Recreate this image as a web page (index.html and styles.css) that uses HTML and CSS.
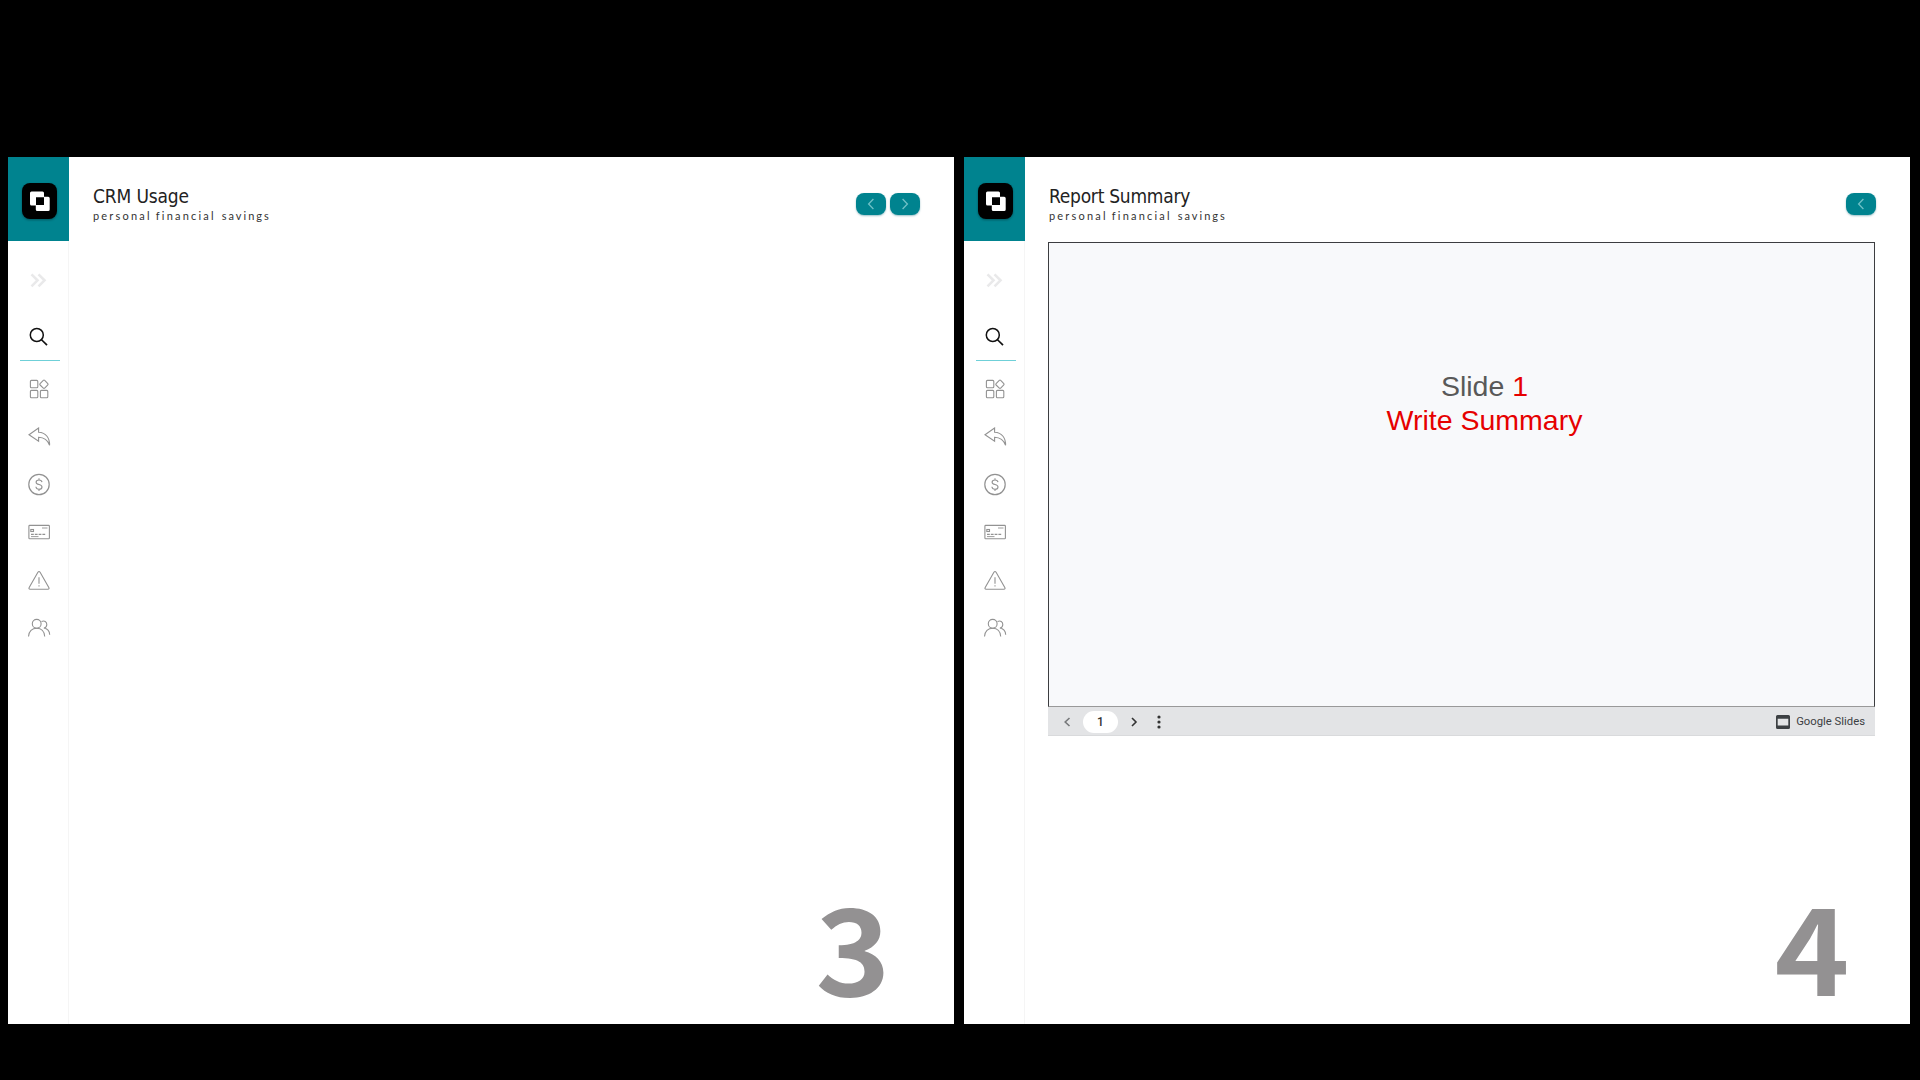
FILE: index.html
```html
<!DOCTYPE html>
<html lang="en">
<head>
<meta charset="utf-8">
<title>CRM Report</title>
<link rel="stylesheet" href="styles.css">
</head>
<body>
<svg class="sprite" aria-hidden="true">
  <symbol id="logo" viewBox="0 0 35 36">
    <rect width="35" height="36" rx="8" fill="#000"/>
    <path fill="#fff" fill-rule="evenodd" d="M9.5 8.5h11a1.5 1.5 0 0 1 1.5 1.5v3.7h4.2a1.5 1.5 0 0 1 1.5 1.5v11.3a1.5 1.5 0 0 1-1.5 1.5H15.300a1.500 1.500 0 0 1-1.500-1.500V22.500H9.500A1.500 1.500 0 0 1 8 21V10a1.500 1.500 0 0 1 1.500-1.500zM14 14.200v7.800h8v-7.800z"/>
  </symbol>
  <symbol id="expand" viewBox="0 0 24 24"><path d="M4.500 6.300l6 6-6 6M11.500 6.300l6 6-6 6" stroke="#e9e9ea" stroke-width="2.600"/></symbol>
  <symbol id="search" viewBox="0 0 24 24"><circle cx="9.800" cy="11" r="6.500" stroke="#111" stroke-width="1.500"/><path d="M14.300 15.500l5.700 5.700" stroke="#111" stroke-width="1.700"/></symbol>
  <symbol id="grid" viewBox="0 0 24 24"><rect x="3.400" y="3.400" width="7.400" height="7.400" rx="1"/><rect x="3.400" y="13.400" width="7.400" height="7.400" rx="1"/><rect x="13.400" y="13.400" width="7.400" height="7.400" rx="1"/><path d="M16.300 3.300l-3.200 3.300q-.7.700 0 1.400l3.200 3.100q.7.600 1.400 0l3.100-3.200q.6-.6 0-1.300l-3.100-3.300q-.7-.7-1.400 0z"/></symbol>
  <symbol id="reply" viewBox="0 0 24 24"><path d="M11.600 3L2 9.700l9.600 6.500v-3.900c5 .2 9 2.500 11 8 .2-7-3.500-12.800-11-13.100z"/></symbol>
  <symbol id="dollar" viewBox="0 0 24 24"><circle cx="12" cy="11.500" r="10.200" stroke-width="1.200"/><path d="M15 9.200c-.2-1.400-1.300-2.200-3-2.200s-2.900.9-2.900 2.200c0 3.200 5.900 1.500 5.900 4.700 0 1.400-1.300 2.300-3 2.300s-2.900-.9-3.100-2.400M12 5.300V7M12 16.200v1.900"/></symbol>
  <symbol id="card" viewBox="0 0 24 24"><rect x="1.900" y="4.400" width="20.500" height="13.300" rx=".8"/><rect x="3.800" y="8.500" width="2.700" height="2"/><path d="M15 7h5.500" stroke-width=".9"/><path d="M4 13.400h14.500" stroke-dasharray="2.800 1"/><path d="M4 15.600h7.500" stroke-width=".9"/></symbol>
  <symbol id="warn" viewBox="0 0 24 24"><path d="M10.900 3.300L2.200 18.500q-.8 1.700.9 1.700h17.800q1.700 0 .9-1.700L13.100 3.300q-1.100-1.700-2.200 0z"/><path d="M12 8.200v6.600M12 16.200v1.300"/></symbol>
  <symbol id="users" viewBox="0 0 24 24"><circle cx="9.700" cy="6.800" r="4.400"/><path d="M1.500 19.600c.2-5.200 3.700-8.400 8.200-8.400s7.800 3.200 8 8.400M14.500 4.600c3-1.400 5.300.1 5.300 2.900 0 1.700-1 3-2.500 3.600M16.800 11c3.500.5 5.700 3 5.900 6.700"/></symbol>
  <symbol id="prev" viewBox="0 0 30 22"><path d="M17.400 6l-4.800 5 4.800 5"/></symbol>
  <symbol id="next" viewBox="0 0 30 22"><path d="M12.600 6l4.800 5-4.800 5"/></symbol>
</svg>

<main class="board">
  <section class="page">
    <nav class="sidebar">
      <div class="brand"><svg class="logo"><use href="#logo"/></svg></div>
      <div class="slot slot-expand"><svg class="icon"><use href="#expand"/></svg></div>
      <div class="slot slot-search"><svg class="icon"><use href="#search"/></svg></div>
      <div class="slot"><svg class="icon"><use href="#grid"/></svg></div>
      <div class="slot"><svg class="icon"><use href="#reply"/></svg></div>
      <div class="slot"><svg class="icon"><use href="#dollar"/></svg></div>
      <div class="slot"><svg class="icon"><use href="#card"/></svg></div>
      <div class="slot"><svg class="icon"><use href="#warn"/></svg></div>
      <div class="slot"><svg class="icon"><use href="#users"/></svg></div>
    </nav>
    <div class="content">
      <header class="header">
        <div>
          <h1 class="title title-crm">CRM Usage</h1>
          <p class="subtitle"><span>personal</span><span>financial</span><span class="last">savings</span></p>
        </div>
        <div class="pager">
          <svg class="nav-btn"><use href="#prev"/></svg>
          <svg class="nav-btn"><use href="#next"/></svg>
        </div>
      </header>
      <div class="number">3</div>
    </div>
  </section>

  <section class="page">
    <nav class="sidebar">
      <div class="brand"><svg class="logo"><use href="#logo"/></svg></div>
      <div class="slot slot-expand"><svg class="icon"><use href="#expand"/></svg></div>
      <div class="slot slot-search"><svg class="icon"><use href="#search"/></svg></div>
      <div class="slot"><svg class="icon"><use href="#grid"/></svg></div>
      <div class="slot"><svg class="icon"><use href="#reply"/></svg></div>
      <div class="slot"><svg class="icon"><use href="#dollar"/></svg></div>
      <div class="slot"><svg class="icon"><use href="#card"/></svg></div>
      <div class="slot"><svg class="icon"><use href="#warn"/></svg></div>
      <div class="slot"><svg class="icon"><use href="#users"/></svg></div>
    </nav>
    <div class="content">
      <header class="header">
        <div>
          <h1 class="title title-report">Report Summary</h1>
          <p class="subtitle"><span>personal</span><span>financial</span><span class="last">savings</span></p>
        </div>
        <div class="pager">
          <svg class="nav-btn"><use href="#prev"/></svg>
        </div>
      </header>
      <div class="viewer">
        <div class="slide">
          <p class="slide-text">Slide <span class="red">1</span></p>
          <p class="slide-text red">Write Summary</p>
        </div>
        <div class="toolbar">
          <svg class="tool" viewBox="0 0 10 12"><path d="M7.500 2L3.200 6l4.300 4" stroke="#77797b"/></svg>
          <span class="current">1</span>
          <svg class="tool tool-next" viewBox="0 0 10 12"><path d="M3 2l4 4-4 4" stroke="#333"/></svg>
          <svg class="dots" viewBox="0 0 4 14"><circle cx="2" cy="2" r="1.600"/><circle cx="2" cy="7" r="1.600"/><circle cx="2" cy="12" r="1.600"/></svg>
          <svg class="slides-icon" viewBox="0 0 14 14"><path fill-rule="evenodd" d="M1.500 0h11Q14 0 14 1.500v11Q14 14 12.500 14h-11Q0 14 0 12.500v-11Q0 0 1.500 0zM1.700 3.700v6.800h10.600V3.700z"/></svg>
          <span class="credit">Google Slides</span>
        </div>
      </div>
      <div class="number number-four">4</div>
    </div>
  </section>
</main>
</body>
</html>
```

FILE: styles.css
```css
* { box-sizing: border-box; }
body { margin: 0; background: #000; overflow: hidden; }
h1, p { margin: 0; font-weight: 400; }
svg { display: block; flex: none; }
.sprite { display: none; }
.board {
  display: flex;
  gap: 10px;
  width: 1920px;
  height: 1080px;
  padding: 157px 10px 56px 8px;
}
.page { display: flex; width: 946px; height: 867px; background: #fff; }
.sidebar {
  display: flex;
  flex-direction: column;
  width: 61px;
  border-right: 1px solid #f5f5f5;
}
.brand {
  width: 61px;
  height: 84px;
  padding: 26px 0 0 14px;
  background: #00838f;
}
.logo { width: 35px; height: 36px; filter: drop-shadow(0 1px 1px rgba(0, 0, 0, .35)); }
.slot { height: 48px; padding: 12px 0 0 19px; }
.slot-expand { height: 79px; padding-top: 27px; }
.slot-search {
  width: 40px;
  height: 41px;
  margin: 0 0 4px 12px;
  padding: 4px 0 0 7px;
  border-bottom: 1px solid #6fd0d8;
}
.icon { width: 24px; height: 24px; fill: none; stroke: #929292; stroke-width: 1.100; }
.content { display: flex; flex: 1; flex-direction: column; }
.header {
  display: flex;
  justify-content: space-between;
  height: 85px;
  padding: 26px 34.500px 0 24px;
}
.title {
  height: 26px;
  font: 400 19px/27px "DejaVu Sans Condensed", "DejaVu Sans", sans-serif;
  font-stretch: condensed;
  color: #222;
  letter-spacing: -.25px;
}
.title-crm { letter-spacing: -.15px; }
.subtitle {
  display: flex;
  gap: 4px;
  font: 400 11px/14px Lato, sans-serif;
  letter-spacing: 2.200px;
  color: #333;
}
.subtitle .last { margin-left: 2px; letter-spacing: 2px; }
.pager { display: flex; gap: 4px; padding-top: 10px; }
.nav-btn {
  width: 30px;
  height: 22px;
  border-radius: 8px;
  background: #00838f;
  box-shadow: 0 1px 2px rgba(0, 100, 120, .4);
  fill: none;
  stroke: #6fc0c6;
  stroke-width: 1.300;
}
.viewer { width: 827px; margin-left: 23px; }
.slide {
  height: 465px;
  padding: 126px 0 0 46px;
  border: 1px solid #3c3d40;
  border-bottom-color: #999;
  background: #f8f9fb;
}
.slide-text {
  font: 400 28.500px/34px "Liberation Sans", Arial, sans-serif;
  text-align: center;
  color: #595959;
}
.slide .red { color: #e60000; }
.toolbar {
  display: flex;
  align-items: center;
  height: 29px;
  padding: 1px 10px 0 14px;
  background: #e3e4e6;
  border-bottom: 1px solid #d9dadc;
}
.tool { width: 10px; height: 12px; fill: none; stroke-width: 1.600; }
.current {
  width: 35px;
  height: 22px;
  margin: 0 11px;
  border-radius: 11px;
  background: #fff;
  font: 500 12px/22px Roboto, sans-serif;
  text-align: center;
  color: #333;
}
.dots { width: 4px; height: 14px; margin-left: 18px; fill: #333; }
.slides-icon { width: 14px; height: 14px; margin-left: auto; fill: #3c4043; }
.credit {
  margin-left: 6px;
  font: 400 11.300px/16px Roboto, sans-serif;
  color: #3c4043;
}
.number {
  width: 80px;
  height: 121px;
  margin: auto 61px 19px auto;
  font: 700 120px/121px "Noto Sans CJK SC", sans-serif;
  text-align: center;
  color: #939192;
  transform: scaleX(1.06);
}
.number-four { margin-right: 58px; }
```
